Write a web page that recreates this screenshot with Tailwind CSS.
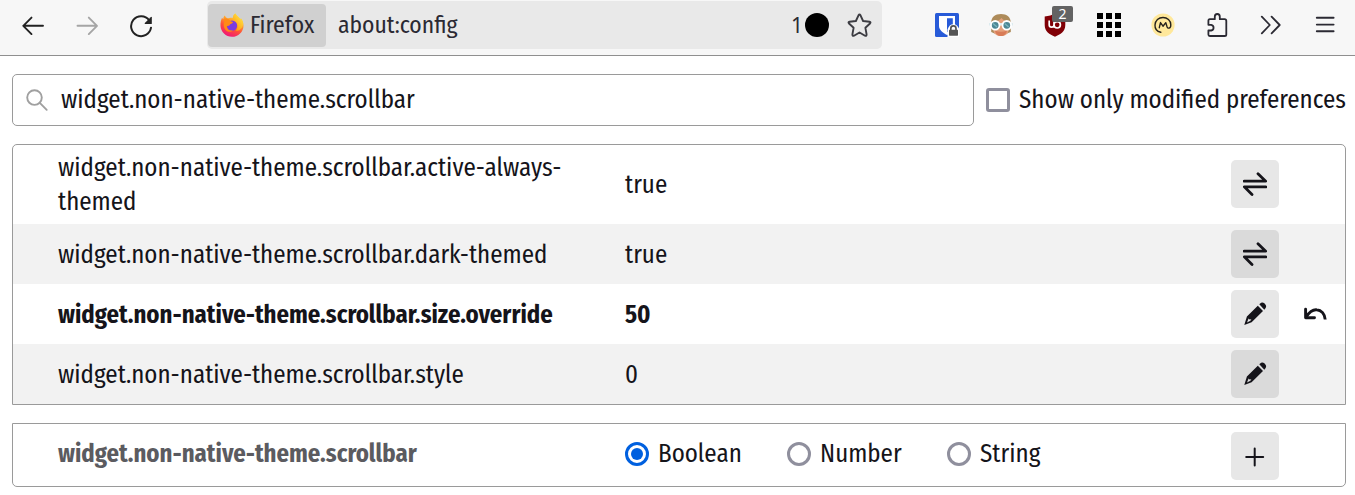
<!DOCTYPE html>
<html lang="en">
<head>
<meta charset="utf-8">
<title>about:config</title>
<script src="https://cdn.jsdelivr.net/npm/@tailwindcss/browser@4"></script>
</head>
<body class="relative h-[495px] overflow-hidden bg-white font-['Fira_Sans_Condensed','Open_Sans',sans-serif] text-[24.95px] leading-[34px] text-[#15141a]">
<svg class="hidden">
  <defs>
    <symbol id="toggle" viewBox="0 0 24 24"><path d="M1.2 9.2H22.7L15 1.7M22.8 14.8H1.3L9 22.4" fill="none" stroke="#15141a" stroke-width="2.8" stroke-linecap="round" stroke-linejoin="round"/></symbol>
    <symbol id="edit" viewBox="0 0 24 24"><g fill="#15141a"><path d="M16.3 2.2 18.1.7Q19.8-.2 21.6 1.6L22.2 2.2Q23.8 4 22.6 6L21.3 7.7Z"/><path fill-rule="evenodd" d="M14.8 3.7 20 8.9 8.6 20.2 1.3 22.9 3.9 14.6ZM5.6 16.4 4 20.6 7.4 18.8 8.4 17.2 6.6 17.5Z"/></g></symbol>
  </defs>
</svg>

<header class="flex h-14 items-start border-b border-[#8f8f8f] bg-[#f7f7f7] text-[23.6px] leading-[44px] text-[#2b2a33]">
  <nav class="flex w-[207px] gap-[30px] pt-[14px] pl-[21px]">
    <svg class="size-6" viewBox="0 0 24 24" fill="none" stroke="#222" stroke-width="1.9" stroke-linecap="round" stroke-linejoin="round"><path d="M22 11.8H2.3M10.5 3.6 2.3 11.8l8.2 8.3"/></svg>
    <svg class="size-6" viewBox="0 0 24 24" fill="none" stroke="#a5a5a5" stroke-width="1.9" stroke-linecap="round" stroke-linejoin="round"><path d="M2.5 11.8H21.8M13.8 3.6 22 11.8l-8.2 8.3"/></svg>
    <svg class="size-6" viewBox="0 0 24 24" fill="none"><path d="M20.2 6.3A10 10 0 1 0 22 13.7" stroke="#222" stroke-width="2" stroke-linecap="round"/><path d="M22.8 3.2V9.4Q22.8 10 22.2 10H16.2Q15.2 9.8 15.8 9L21.7 3.3Q22.8 2.4 22.8 3.2Z" fill="#222"/></svg>
  </nav>
  <div class="mt-px flex h-12 w-[675px] items-center rounded-[5px] bg-[#e9e9e9] pr-[10.5px] pl-px">
    <div class="flex h-[43px] w-[118px] items-center rounded bg-[#d0d0d0] pl-3">
      <svg class="size-6" viewBox="0 0 24 24">
        <defs>
          <linearGradient id="fox" x1=".8" y1="0" x2=".35" y2="1"><stop offset="0" stop-color="#fff44f"/><stop offset=".35" stop-color="#ffa52b"/><stop offset=".65" stop-color="#ff5038"/><stop offset="1" stop-color="#f0147a"/></linearGradient>
          <linearGradient id="wing" x1="1" y1="0" x2=".3" y2="1"><stop offset="0" stop-color="#fff44f"/><stop offset="1" stop-color="#ff980e"/></linearGradient>
        </defs>
        <path d="M15.4.5C13.6 1.6 13 3.4 12.9 4.8 10.5 4.6 8.6 5 7.6 5.5 6.2 4.9 5.2 3.7 4.8 2.6 3.7 3.6 3.3 5 3.3 6.2L2 4.8C1.1 7 .4 9.5.5 12.8.8 19 5.8 23.8 12 23.8S23.5 18.9 23.5 12.7C23.5 9.3 22.2 6.4 20.7 5.2L20.9 7C19.4 4 16.7 3.5 15.4.5Z" fill="url(#fox)"/>
        <circle cx="12" cy="12.6" r="5.2" fill="#7a3be0"/>
        <path d="M15.4.5C12 2.6 12.8 6.5 15.4 8.3 18.4 11 18 15.5 15.5 17.8 20.6 18 23.4 14 23.1 10 22.5 7.1 21.5 5.8 20.7 5.2L20.9 7C19.4 4 16.7 3.5 15.4.5Z" fill="url(#wing)"/>
        <path d="M3.3 6.2C5.5 5 8.6 5.4 9.7 7.2 10.5 8.5 12 8.5 13.2 8.9 12.4 10.7 10.4 10.5 9.9 11.7 9.4 13.3 7.9 12.5 6.9 13.3 7 16.7 10 18.3 12.9 17.2 10.4 20.4 4.5 18.4 3.8 13.2 3.5 11 4 9.2 4.6 8.5Z" fill="#ff8a16"/>
      </svg>
      <span class="ml-[6px]">Firefox</span>
    </div>
    <span class="ml-3">about:config</span>
    <span class="ml-auto font-['Noto_Sans',sans-serif] text-[21px] text-[#2b2a33]">1</span>
    <span class="ml-[2px] size-6 rounded-full bg-black"></span>
    <svg class="ml-[17.5px] size-[25px]" viewBox="0 0 25 25" fill="none" stroke="#3c3c42" stroke-width="1.9" stroke-linejoin="round"><path d="M11.5 2.3Q12.5.8 13.5 2.3L16.1 8 22.5 8.8Q24.2 9.1 23 10.5L18.4 14.8 19.6 21.4Q19.7 23.4 18 22.7L12.5 19.5 7 22.7Q5.3 23.4 5.4 21.4L6.6 14.8 2 10.5Q.8 9.1 2.5 8.8L8.9 8Z"/></svg>
  </div>
  <div class="flex flex-1 items-center gap-[30px] pt-[13px] pl-[53px]">
    <svg class="size-6" viewBox="0 0 24 24"><rect width="24" height="24" rx="1.5" fill="#285bd8"/><path d="M4 3H20V13C20 18 15 20.5 12 22 8 20 4 17 4 13Z" fill="#fff"/><path d="M12 5.3H17.8V13C17.8 16 14.5 18 12 19.3Z" fill="#285bd8"/><path d="M12.5 24V16.5C14 13 15.2 11.3 18.4 11.3S22.5 13 24 15.5V24Z" fill="#fff"/><path d="M15.8 17V15.5a2.6 2.6 0 0 1 5.2 0V17" fill="none" stroke="#555" stroke-width="1.7"/><rect x="14" y="16.7" width="9" height="6" rx=".6" fill="#555"/></svg>
    <svg class="size-6" viewBox="0 0 24 24"><path d="M2.2 10C2 4.2 6.2 1 12 1S22 4.2 21.8 10V19L18 20.5H5.5L2.2 19Z" fill="#ad8b5a"/><path d="M4.5 9C8 9 10.5 7 12.5 5 14 7.5 17.5 8 19.5 9V17C19.5 21 16 23 12 23S4.5 21 4.5 17Z" fill="#e5a07b"/><path d="M6 17.5Q12 20 18 17.5C17.5 21 15 23 12 23S6.5 21 6 17.5Z" fill="#d87c58"/><path d="M0 10H24V12.5H0Z" fill="#dcebef"/><circle cx="6.2" cy="12.3" r="4.3" fill="#4d8795" stroke="#fff" stroke-width="1.8"/><circle cx="17.8" cy="12.3" r="4.3" fill="#4d8795" stroke="#fff" stroke-width="1.8"/><path d="M4 10.5 8 14M15.6 10.5l4 3.5" stroke="#7ab4bd" stroke-width="1.3"/></svg>
    <div class="relative size-6">
      <svg class="size-6" viewBox="0 0 24 24"><path d="M12 .3C9 2.3 6 3.3 1.7 3.4V12C1.7 18.5 6.5 21.3 12 23.7 17.5 21.3 22.3 18.5 22.3 12V3.4C18 3.3 15 2.3 12 .3Z" fill="#800006"/><path d="M6.2 7.5v4.3a2.4 2.4 0 0 0 4.8 0V8.5m0 3.3a3.2 3.2 0 1 0 3.2-3.2 3.2 3.2 0 0 0-3.2 3.2" fill="none" stroke="#fff" stroke-width="1.7"/></svg>
      <span class="absolute -top-[7px] left-[9px] h-4 w-[21px] rounded-[2px] bg-[#636363] text-center font-['Noto_Sans',sans-serif] text-[14px] leading-[15px] text-white">2</span>
    </div>
    <svg class="size-6" viewBox="0 0 24 24"><path d="M0 0h6v6H0zM9 0h6v6H9zM18 0h6v6h-6zM0 9h6v6H0zM9 9h6v6H9zM18 9h6v6h-6zM0 18h6v6H0zM9 18h6v6H9zM18 18h6v6h-6z" fill="#000"/></svg>
    <svg class="size-6" viewBox="0 0 24 24"><circle cx="12" cy="12" r="11.6" fill="#ffe89b"/><path d="M9.8 19.3C6 18.5 3.8 15.5 4 12 4.2 7.4 7.7 4.5 12 4.5S19.7 7.5 19.8 11.7C19.9 16 16.2 16 15.8 13L14.8 9.6 12 13.2 9.5 9.6 8.3 14.7" fill="none" stroke="#26221d" stroke-width="1.4" stroke-linecap="round" stroke-linejoin="round"/></svg>
    <svg class="ml-px size-6" viewBox="0 0 24 24" fill="none" stroke="#2b2a33" stroke-width="1.8" stroke-linejoin="round"><path d="M3.8 23Q2.4 23 2.4 21.6V17.5H5.2A2.9 2.9 0 0 0 5.2 11.8H2.4V7.7Q2.4 6.2 3.8 6.2H8.8V3.8A2.5 2.8 0 0 1 13.8 3.8V6.2H18.6Q20.3 6.2 20.3 7.9V21.4Q20.3 23 18.7 23Z"/></svg>
    <svg class="-ml-px size-6" viewBox="0 0 24 24" fill="none" stroke="#2b2a33" stroke-width="1.8" stroke-linecap="round" stroke-linejoin="round"><path d="M2.8 3.7 10.8 12 2.8 20.3M12.6 3.7 20.7 12 12.6 20.3"/></svg>
    <svg class="size-6" viewBox="0 0 24 24" stroke="#2b2a33" stroke-width="1.9" stroke-linecap="round"><path d="M3.8 4.8H20.6M3.8 11.6H20.6M3.8 18.3H20.6"/></svg>
  </div>
</header>

<main class="px-3 pt-[18px]">
  <div class="flex h-[52px] items-center">
    <div class="flex h-full w-[962px] shrink-0 items-center rounded-[5px] border border-[#9a9a9a] pl-[13px]">
      <svg class="size-[23px]" viewBox="0 0 23 23" fill="none" stroke="#a0a0a0" stroke-width="1.9" stroke-linecap="round"><circle cx="8.5" cy="8.6" r="7.3"/><path d="M13.8 13.9 20.7 20.8"/></svg>
      <span class="ml-3">widget.non-native-theme.scrollbar</span>
    </div>
    <span class="ml-3 size-6 shrink-0 rounded-[3px] border-[3px] border-[#8f8f9d] bg-white"></span>
    <span class="ml-[9px] whitespace-nowrap">Show only modified preferences</span>
  </div>

  <section class="mt-[18px] h-[261px] w-[1334px] overflow-hidden rounded-t-[5px] border border-[#9a9a9a]">
    <div class="flex h-[79px] items-center pl-[45px]">
      <span class="mt-px w-[567px]">widget.non-native-theme.scrollbar.active-always-<br>themed</span>
      <span class="mt-px w-[606px]">true</span>
      <span class="-mt-px grid size-12 place-items-center rounded-[5px] bg-[#e7e7e7]"><svg class="size-6"><use href="#toggle"/></svg></span>
    </div>
    <div class="flex h-[60px] items-center bg-[#f2f2f2] pl-[45px]">
      <span class="mt-[2px] w-[567px]">widget.non-native-theme.scrollbar.dark-themed</span>
      <span class="mt-[2px] w-[606px]">true</span>
      <span class="grid size-12 place-items-center rounded-[5px] bg-[#dadada]"><svg class="size-6"><use href="#toggle"/></svg></span>
    </div>
    <div class="flex h-[60px] items-center pl-[45px] text-[24.65px] font-bold">
      <span class="mt-[2px] w-[567px]">widget.non-native-theme.scrollbar.size.override</span>
      <span class="mt-[2px] w-[606px]">50</span>
      <span class="grid size-12 place-items-center rounded-[5px] bg-[#e7e7e7]"><svg class="size-6"><use href="#edit"/></svg></span>
      <svg class="ml-6 size-6" viewBox="0 0 24 24" fill="none" stroke="#15141a" stroke-width="2.9" stroke-linecap="round" stroke-linejoin="round"><path d="M2.6 7.3V15.7H11.5"/><path d="M3.4 14.8C6 10.6 9.5 7.4 13.7 7.8 18.4 8 21.8 12 22.2 17.5" stroke-linecap="butt"/></svg>
    </div>
    <div class="flex h-[60px] items-center bg-[#f2f2f2] pl-[45px]">
      <span class="mt-[2px] w-[567px]">widget.non-native-theme.scrollbar.style</span>
      <span class="mt-[2px] w-[606px]">0</span>
      <span class="grid size-12 place-items-center rounded-[5px] bg-[#dadada]"><svg class="size-6"><use href="#edit"/></svg></span>
    </div>
  </section>

  <section class="mt-[18px] flex h-16 w-[1334px] items-center rounded-b-[5px] border border-[#9a9a9a] pl-[45px]">
    <span class="-mt-[2px] w-[567px] text-[24.65px] font-bold text-[#5b5b60]">widget.non-native-theme.scrollbar</span>
    <div class="-mt-[2px] flex w-[606px]">
      <label class="flex w-[162px] items-center gap-[9px]"><span class="grid size-6 place-items-center rounded-full border-[3px] border-[#0060df]"><span class="size-3 rounded-full bg-[#0060df]"></span></span>Boolean</label>
      <label class="flex w-[160px] items-center gap-[9px]"><span class="size-6 rounded-full border-[3px] border-[#8f8f9d]"></span>Number</label>
      <label class="flex items-center gap-[9px]"><span class="size-6 rounded-full border-[3px] border-[#8f8f9d]"></span>String</label>
    </div>
    <span class="mt-px grid size-12 place-items-center rounded-[5px] bg-[#e7e7e7]"><svg class="size-6" viewBox="0 0 24 24" stroke="#15141a" stroke-width="2" stroke-linecap="round"><path d="M3.2 13H20.2M11.7 4.5V21.5"/></svg></span>
  </section>
</main>
</body>
</html>
